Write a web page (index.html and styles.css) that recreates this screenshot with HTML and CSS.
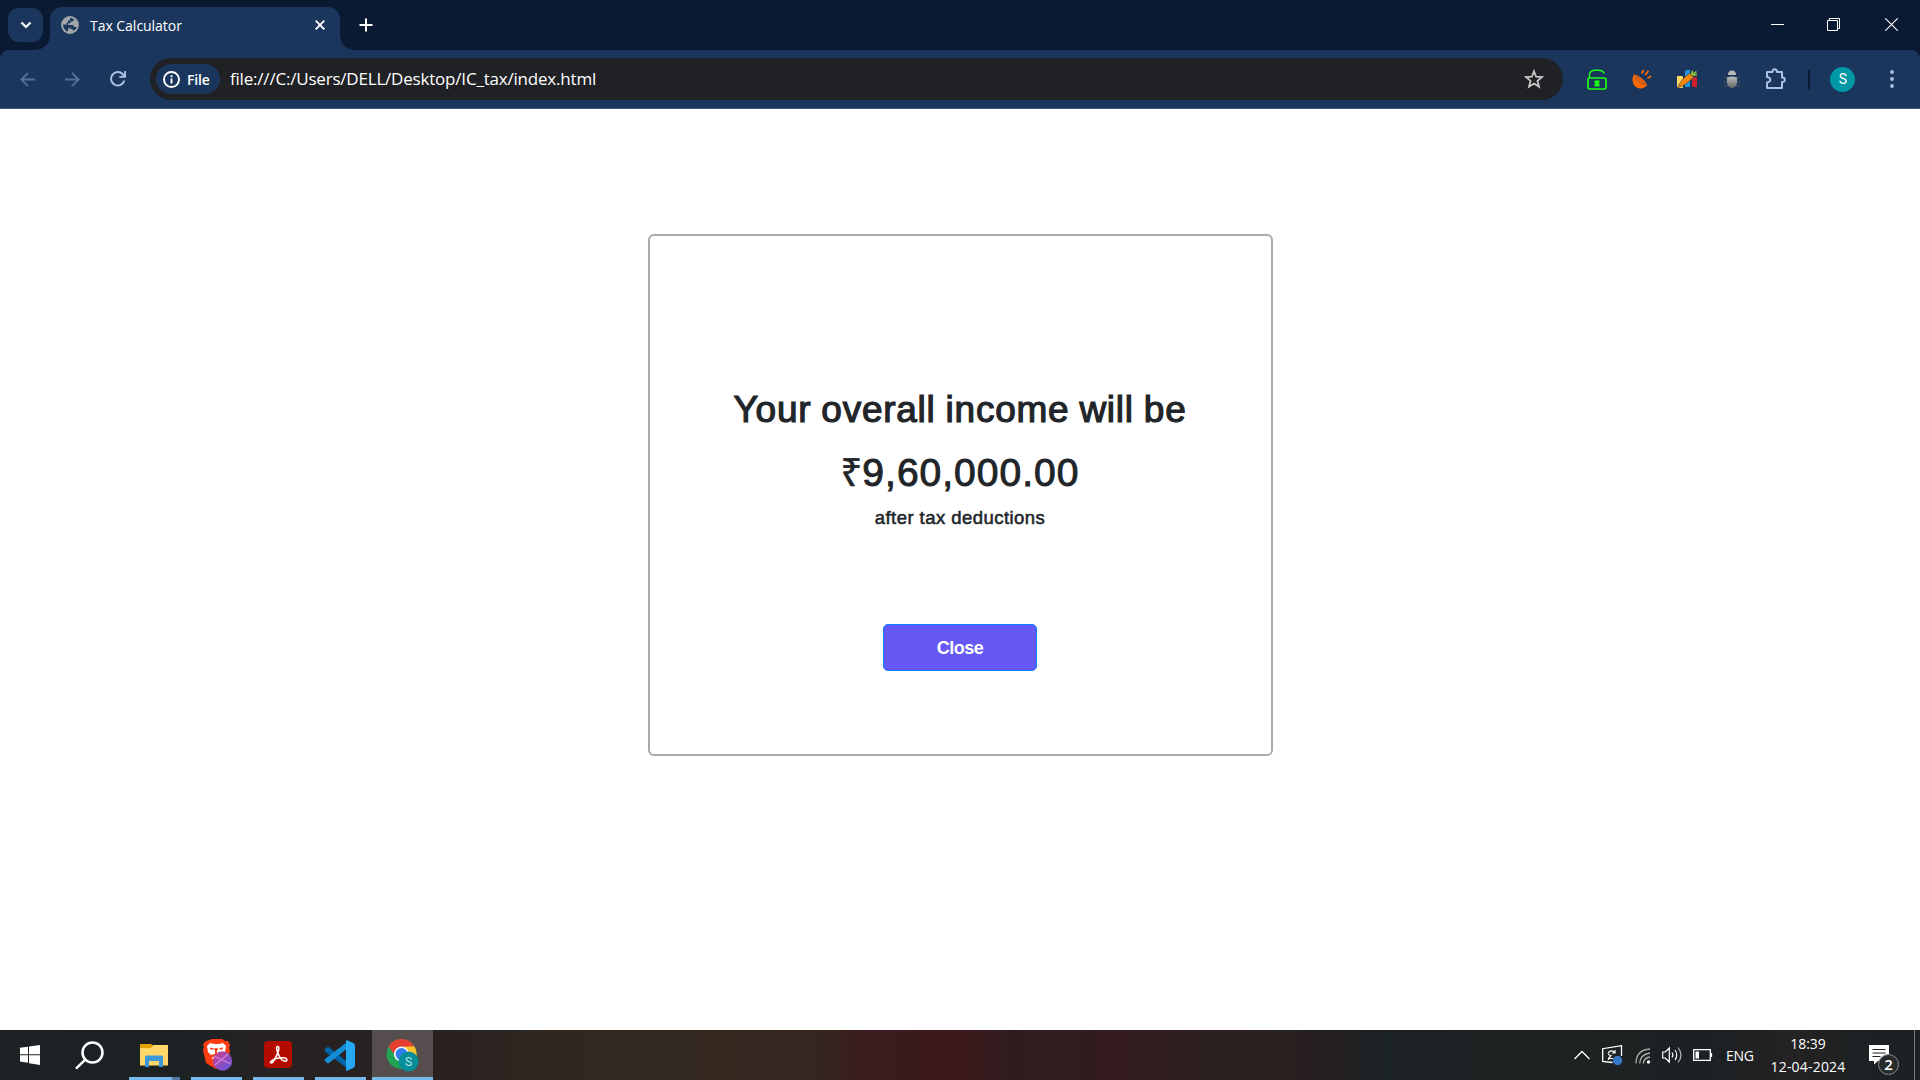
FILE: index.html
```html
<!DOCTYPE html>
<html lang="en">
<head>
<meta charset="utf-8">
<title>Tax Calculator</title>
<link rel="stylesheet" href="styles.css">
</head>
<body>
<div class="screen">
  <header class="tabstrip">
    <button class="tab-search" aria-label="Search tabs"><svg width="12" height="8" viewBox="0 0 12 8"><path d="M1.5 1.5 6 6l4.500-4.500" fill="none" stroke="#fff" stroke-width="2.200"/></svg></button>
    <div class="tab">
      <svg class="globe" width="18" height="18" viewBox="0 0 18 18"><circle cx="9" cy="9" r="8.900" fill="#a3a6aa"/><path d="M2 8.500h3.500q2 0 2 1.700h1.300v2.300H7v3.200C4 14.800 2 12 2 8.500zM9 2.100q2.200 0 4 1.300-.3 2-2.300 2H9.500v1.800H7.200v1.900h4.200q1.500 0 1.700 1.900h2.700q-.8 2.600-3.200 4-.2-1.900-1.900-1.900H9.300v-2.300H6.500V8.500L4.900 6.800h2V4.600H9z" fill="#1b365d"/></svg>
      <span class="tab-title">Tax Calculator</span>
      <svg class="tab-close" width="10" height="10" viewBox="0 0 10 10"><path d="m.7.7 8.600 8.600M9.300.7.7 9.300" stroke="#fff" stroke-width="1.900"/></svg>
    </div>
    <svg class="new-tab" width="14" height="14" viewBox="0 0 14 14"><path d="M7 .5v13M.5 7h13" stroke="#fff" stroke-width="2"/></svg>
    <div class="window-controls">
      <svg width="13" height="13" viewBox="0 0 13 13"><path d="M0 6.500h13" stroke="#fff"/></svg>
      <svg width="13" height="13" viewBox="0 0 13 13" fill="none" stroke="#fff"><path d="M.5 2.500h10v10H.5zM2.500 2.500v-2h10v10h-2"/></svg>
      <svg width="13" height="13" viewBox="0 0 13 13"><path d="m.3.300 12.400 12.400M12.700.3.300 12.700" stroke="#fff" stroke-width="1.100"/></svg>
    </div>
  </header>

  <nav class="toolbar">
    <div class="nav-buttons">
      <svg width="15" height="15" viewBox="0 0 15 15" fill="none" stroke="#566f99" stroke-width="1.800"><path d="M15 7.500H1.500M8 .8 1.300 7.500 8 14.200"/></svg>
      <svg width="15" height="15" viewBox="0 0 15 15" fill="none" stroke="#566f99" stroke-width="1.800"><path d="M0 7.500h13.500M7 .8l6.700 6.700L7 14.200"/></svg>
      <svg width="16" height="16" viewBox="0 0 16 16"><path d="M14.300 9.500A6.700 6.700 0 1 1 12.700 3.200L14.500 5" fill="none" stroke="#abc0e4" stroke-width="2"/><path d="M16 0v6.800H9.300V4.900h4.800V0z" fill="#abc0e4"/></svg>
    </div>
    <div class="omnibox">
      <div class="file-chip">
        <svg width="17" height="17" viewBox="0 0 17 17"><circle cx="8.500" cy="8.500" r="7.500" fill="none" stroke="#fff" stroke-width="1.900"/><path d="M8.500 7.500v5M8.500 4.300v1.900" stroke="#fff" stroke-width="1.900"/></svg>
        <span>File</span>
      </div>
      <span class="url">file:///C:/Users/DELL/Desktop/IC_tax/index.html</span>
      <svg class="star" width="20" height="20" viewBox="0 0 20 20"><path d="m10 2.200 2.100 5.500 5.900.4-4.500 3.800 1.500 5.800-5-3.200-5 3.200 1.500-5.800L2 8.100l5.900-.4z" fill="none" stroke="#c7c7c7" stroke-width="1.800"/></svg>
    </div>
    <div class="extensions">
      <svg width="20" height="21" viewBox="0 0 20 21"><path d="M2.500 9V5.500C2.500 2.800 5 1.200 8 1.200h3.500c3 0 5 1.200 5.700 3.300" fill="none" stroke="#1cff12" stroke-width="1.500"/><rect x="1" y="9" width="18" height="11" rx="1.500" fill="none" stroke="#1cff12" stroke-width="1.700"/><path d="M7.500 11.500h5V14h-.7v1h.7v2.500h-5V15h.7v-1h-.7z" fill="#1cff12"/></svg>
      <svg width="20" height="20" viewBox="0 0 20 20"><path d="M2 5.600C6 5.500 15.500 13 14.900 16.600 11 20.800 4.600 20.200 1.800 15.700.1 12.500.1 8.400 2 5.600z" fill="#ff6a00"/><path d="M3 6.800c3.600 1.100 8.900 5.700 10.500 8.800-4.800-.3-10.700-4.500-10.500-8.800z" fill="#f65b00" stroke="#7d5948" stroke-width=".7"/><path d="m9.800 4.500 1.800-3.700M13.300 6l3.200-4.300M15.500 9.300l3.700-2.200" stroke="#ff6a00" stroke-width="1.800"/></svg>
      <svg width="22" height="20" viewBox="0 0 22 20"><rect x="1" y="7" width="6" height="12" rx="1" fill="#ffda61"/><path d="M9 3q0-2 2-2h3v17H9z" fill="#2196df"/><path d="M16 10q0-2 2-2h3v10h-5z" fill="#cd2028"/><path d="M1.200 19.300Q5 10 13.500 4.300l4.200 3.900Q10 16.300 1.200 19.300z" fill="#f88708" stroke="#1b365d" stroke-width=".6"/><path d="m15.500 5.700 1-4M16 5.700l4.500-3M16.500 6.200l4.500-.7" stroke="#8fc936" stroke-width="1.500"/></svg>
      <svg width="18" height="19" viewBox="0 0 18 19"><defs><linearGradient id="bug" x2="0" y2="1"><stop stop-color="#bcbcbc"/><stop offset="1" stop-color="#626262"/></linearGradient></defs><path d="m1 7 4 2M0 12h4M1.500 17l4-3M17 7l-4 2M18 12h-4M16.500 17l-4-3" stroke="#46536a" stroke-width="1.100"/><path d="M5 5q0-4.500 4-4.500T13 5z" fill="#bababa"/><path d="M4 7.500q5-2 10 0Q15 17.500 9 18.500 3 17.500 4 7.500z" fill="url(#bug)"/></svg>
      <svg width="22" height="22" viewBox="0 0 22 22"><path d="M2 4h5.500q0-2.700 2.200-2.700T12 4h5v5.500q2.800 0 2.800 2.300T17 14v6H2v-5.500q3.300-.6 3.300-2.800T2 9z" fill="none" stroke="#abc0e4" stroke-width="2" stroke-linejoin="round"/></svg>
    </div>
    <div class="toolbar-divider"></div>
    <div class="avatar">S</div>
    <svg class="menu-dots" width="4" height="18" viewBox="0 0 4 18" fill="#abc0e4"><circle cx="2" cy="2" r="1.900"/><circle cx="2" cy="9" r="1.900"/><circle cx="2" cy="16" r="1.900"/></svg>
  </nav>

  <main class="page">
    <section class="result-card">
      <h1 class="result-title">Your overall income will be</h1>
      <div class="result-amount"><span class="rupee">₹</span>9,60,000.00</div>
      <p class="result-note">after tax deductions</p>
      <button class="close-button">Close</button>
    </section>
  </main>

  <footer class="taskbar">
    <div class="task-button"><svg width="20" height="20" viewBox="0 0 20 20" fill="#fff"><path d="M0 2.800 8 1.700v7.500H0zM9 1.500 20 0v9.200H9zM0 10.200h8v7.500l-8-1.100zM9 10.200h11V20L9 18.300z"/></svg></div>
    <div class="task-button search"><svg width="29" height="29" viewBox="0 0 29 29" fill="none" stroke="#fff" stroke-width="2.500"><circle cx="17.500" cy="11.500" r="10"/><path d="m10.300 18.700-9.300 9"/></svg></div>
    <div class="task-app explorer"><svg width="28" height="24" viewBox="0 0 28 24"><path d="M0 1h11l2 2-2 3H0z" fill="#e6a200"/><path d="M0 5h11l2-3h15v20.500H0z" fill="#ffd768"/><path d="M5 14q0-1.500 1.500-1.500h15q1.500 0 1.500 1.500v10h-4v-6H9v6H5z" fill="#3c96d8"/></svg></div>
    <div class="task-app brave"><svg width="32" height="34" viewBox="0 0 32 34"><defs><linearGradient id="orb" x2=".8" y2="1"><stop stop-color="#d04187"/><stop offset="1" stop-color="#6354dd"/></linearGradient></defs><path d="m7 2 3-1h10l3 2h3l2 4-1 3 1 3-4 12-10 6L4 25 1 12l1-3-1-3 3-3z" fill="#ff3c12"/><path d="m5 8 3-3 4 1h5l4-1 3 3-1 6-4 3-4-1v-4l2-1-3-1-3 1 2 1v4l-4 1-3-3zM9 20l5-2 5 2-4 3z" fill="#fff"/><path d="m8 9.500 4 .8-1.500 1.400-2.500-.4zm13 0-4 .8 1.500 1.400 2.500-.4z" fill="#f04a2b"/><circle cx="20.500" cy="23" r="9.700" fill="url(#orb)"/><path d="m12 18 17 8M13 27l13-11" stroke="#d681d9" stroke-width="1.300"/></svg></div>
    <div class="task-app nudge"><svg width="28" height="28" viewBox="0 0 28 28"><rect width="28" height="27" rx="4" fill="#b30b00"/><path d="M13.800 5.500c-3.400-.4 1.200 10.800 4 13.200 3.500 3 6.500.8 4.500-1.100-2.800-2.300-12.300.1-14.800 2.200-2.700 2.300.2 3.200 2.100.2 2.300-3.500 7.600-14 4.200-14.500z" fill="none" stroke="#fff" stroke-width="1.500"/></svg></div>
    <div class="task-app nudge"><svg width="31" height="31" viewBox="0 0 31 31"><path d="M1 9 3 7.200q1-.6 2 0L26 24v6.500L1.300 11.700Q0 10 1 9z" fill="#0065a9"/><path d="m1 21 2 2.100q1 .6 2 0L25 7V.5L1.300 18.700Q0 20 1 21z" fill="#138dd5"/><path d="M22 .5q.8-.5 1.600-.1l5.700 2.700Q31 4 31 6v19q0 2-1.700 2.900l-5.700 2.700q-.8.400-1.600-.1z" fill="#27a8f2"/></svg></div>
    <div class="task-app active"><svg width="33" height="34" viewBox="0 0 33 34"><circle cx="15.500" cy="16" r="15" fill="#23a455"/><path d="M2.500 8.500A15 15 0 0 1 28.500 8.500l-13 1.500-6 8z" fill="#e63e31"/><path d="M28.500 8.500A15 15 0 0 1 15.500 31l7-13-4-9.500z" fill="#fbc32d"/><circle cx="15.500" cy="16" r="7.600" fill="#fff"/><circle cx="15.500" cy="16" r="6" fill="#347ff0"/><circle cx="22.500" cy="23.500" r="10" fill="#088e99"/><text x="22.500" y="28" class="badge-letter">S</text></svg></div>
    <div class="tray">
      <svg class="tray-caret" width="16" height="10" viewBox="0 0 16 10"><path d="m.5 9 7.500-7.500L15.500 9" fill="none" stroke="#fff" stroke-width="1.300"/></svg>
      <svg class="tray-sync" width="21" height="21" viewBox="0 0 21 21"><path d="M10.500 17.500.700 16.300V3.700L19.500.7V11" fill="none" stroke="#fff" stroke-width="1.300"/><path d="M6 8.500c1.500-3.300 5-3.300 6.500-1M13 5v3h-3M11 13.500H6.500M6 9.500l3 1-2.500 3V15" fill="none" stroke="#fff" stroke-width="1.200"/><circle cx="15.500" cy="15.500" r="4.700" fill="#3579c6"/></svg>
      <svg class="tray-wifi" width="16" height="16" viewBox="0 0 16 16" fill="none" stroke="#aaa" stroke-width="1.300"><path d="M1 15.500Q1 2 15 1"/><path d="M4.700 15.500Q5 6.500 15 5"/><path d="M8.400 15.500Q8.500 10 15 9"/><circle cx="13.500" cy="14" r="1" fill="#fff" stroke="#fff"/></svg>
      <svg class="tray-sound" width="21" height="18" viewBox="0 0 21 18" fill="none" stroke="#fff" stroke-width="1.200"><path d="M.7 6v6h2.600l4 4V2l-4 4zM10 6.500q1.800 2.500 0 5M13 4q3.500 5 0 10"/><path d="M16 1.500q6 7.500 0 15" stroke="#bbb"/></svg>
      <svg class="tray-battery" width="20" height="12" viewBox="0 0 20 12"><path d="M.7.700h16.600v10.600H.7zM18.500 4v4" fill="none" stroke="#fff" stroke-width="1.300"/><path d="M2.500 2.500H6v7H2.500z" fill="#fff"/></svg>
      <span class="language">ENG</span>
      <div class="clock"><span class="time">18:39</span><span class="date">12-04-2024</span></div>
      <div class="notifications"><svg width="20" height="20" viewBox="0 0 20 20"><path d="M0 0h20v16H9l-4 3.500V16H0z" fill="#fff"/><path d="M3.500 4.500h13M3.500 8h13M3.500 11.500h8" stroke="#1d2223" stroke-width="1.200"/></svg><span class="count">2</span></div>
      <div class="show-desktop"></div>
    </div>
  </footer>
</div>
</body>
</html>
```
FILE: styles.css
```css
* { box-sizing: border-box; }
body { margin: 0; overflow: hidden; background: #fff; font-family: "Open Sans", "Noto Sans", sans-serif; }
svg { display: block; flex: none; }
button { border: 0; padding: 0; }
.screen { width: 1920px; height: 1080px; display: flex; flex-direction: column; }

.tabstrip { height: 50px; flex: none; display: flex; align-items: flex-start; background: #0a1a33; }
.tab-search { width: 35px; height: 34px; margin: 8px 0 0 8px; display: grid; place-items: center; border-radius: 11px; background: #1b365d; }
.tab { position: relative; width: 290px; height: 43px; margin: 7px 0 0 7px; padding: 0 15px 7px 11px; display: flex; align-items: center; border-radius: 12px 12px 0 0; background: #1b365d; color: #fff; }
.tab::before, .tab::after { content: ""; position: absolute; bottom: 0; width: 14px; height: 14px; }
.tab::before { right: 100%; background: radial-gradient(circle at 0 0, transparent 13.5px, #1b365d 14px); }
.tab::after { left: 100%; background: radial-gradient(circle at 100% 0, transparent 13.5px, #1b365d 14px); }
.tab-title { margin: 1px auto 0 11px; font-size: 14px; line-height: 20px; letter-spacing: -.03px; }
.new-tab { margin: 18px 0 0 18.5px; }
.window-controls { display: flex; gap: 45px; margin: 18px 22px 0 auto; }
.window-controls svg:first-child { margin-right: -2px; }

.toolbar { height: 59px; flex: none; display: flex; align-items: center; background: linear-gradient(#1b365d, #1b365d) 0 10px / 100% 100% no-repeat, radial-gradient(circle at 10px 10px, #1b365d 10px, #0a1a33 10.5px) 0 0 / 10px 10px no-repeat, radial-gradient(circle at 0 10px, #1b365d 10px, #0a1a33 10.5px) 100% 0 / 10px 10px no-repeat, #1b365d; border-bottom: 1px solid #435c80; }
.nav-buttons { width: 150px; padding-left: 20px; display: flex; align-items: center; gap: 30px; }
.omnibox { width: 1413px; height: 42px; padding: 0 19px 0 6px; display: flex; align-items: center; border-radius: 21px; background: #202124; color: #fff; }
.file-chip { width: 64px; height: 30px; padding-left: 7px; display: flex; align-items: center; gap: 7px; border-radius: 15px; background: #1b365d; font-size: 14px; font-weight: 600; letter-spacing: -.2px; }
.url { margin: 0 auto 0 10px; font-size: 17px; line-height: 24px; letter-spacing: -.2px; }
.extensions { display: flex; align-items: center; gap: 24.6px; margin-left: 24px; }
.toolbar-divider { width: 2px; height: 19px; margin-left: 21px; background: #0a1a33; }
.avatar { width: 25px; height: 25px; margin-left: 20px; border-radius: 50%; background: #0097a7; color: #fff; font: 14px/25px Roboto, sans-serif; text-align: center; }
.menu-dots { margin-left: 34.6px; }

.page { flex: 1; display: flex; flex-direction: column; align-items: center; padding-top: 125px; background: #fff; }
.result-card { width: 625px; height: 522px; padding-top: 147px; display: flex; flex-direction: column; align-items: center; border: 2px solid #aaa; border-radius: 6px; color: #212529; font-family: "Liberation Sans", Arial, sans-serif; }
.result-title { margin: 0; font-size: 37px; line-height: 54px; font-weight: 400; letter-spacing: .75px; word-spacing: -1px; white-space: nowrap; -webkit-text-stroke: 1.2px #212529; }
.result-amount { margin-top: 9px; font-size: 39px; line-height: 54px; letter-spacing: 1px; -webkit-text-stroke: 1px #212529; }
.rupee { font-family: "Noto Sans", sans-serif; font-size: 38px; line-height: 0; letter-spacing: 0; -webkit-text-stroke-width: .6px; }
.result-note { margin: 4px 0 0; font-size: 18.5px; line-height: 28px; letter-spacing: .45px; -webkit-text-stroke: .55px #212529; }
.close-button { width: 154px; height: 47px; margin-top: 92px; border: 1px solid #087fff; border-radius: 5px; background: #6558f5; color: #fff; font: bold 18px/47px "Liberation Sans", Arial, sans-serif; letter-spacing: -.5px; }

.taskbar { height: 50px; flex: none; display: flex; background: linear-gradient(90deg, #1d2224 0, #1c2224 180px, #272223 260px, #292120 440px, #302820 560px, #33281f 690px, #35261f 815px, #3b1c1e 865px, #3b181b 965px, #301c1e 1010px, #331b1e 1120px, #2b2020 1220px, #272020 1330px, #1b2225 1380px, #1f2222 1540px, #1b2123 1700px, #252223 1790px, #1c2123 1870px); }
.task-button { width: 60px; display: grid; place-items: center; }
.search { padding-right: 1px; }
.task-app { width: 51px; margin-left: 11px; display: grid; place-items: center; border-bottom: 3px solid #76b9ed; padding-top: 3px; }
.explorer { margin-left: 9px; padding-right: 2px; border-image: linear-gradient(90deg, #76b9ed 41px, #557da4 41px) 3; }
.brave { padding-left: 2px; }
.nudge { padding-right: 2px; }
.active { width: 61px; margin-left: 6px; background: #564e4e; }
.badge-letter { fill: #b6e5e5; font: 12px Roboto, sans-serif; text-anchor: middle; }
.tray { margin-left: auto; display: flex; align-items: center; color: #fff; }
.tray-sync { margin-left: 12px; }
.tray-wifi { margin: 1px 0 0 12px; }
.tray-sound { margin-left: 11px; }
.tray-battery { margin-left: 10px; }
.language { width: 28px; margin-left: 13px; font-size: 14px; letter-spacing: -.3px; }
.clock { width: 78px; margin-left: 15px; display: flex; flex-direction: column; align-items: center; font-size: 14px; line-height: 23px; }
.date { letter-spacing: .2px; }
.notifications { position: relative; margin-left: 22px; }
.count { position: absolute; left: 9px; top: 9px; width: 21px; height: 21px; border: 1px solid #8c8c8c; border-radius: 50%; background: #282b2c; font-size: 15px; font-weight: 600; line-height: 19px; text-align: center; }
.show-desktop { width: 6px; height: 50px; margin-left: 25px; border-left: 1px solid #777b7c; }
```
